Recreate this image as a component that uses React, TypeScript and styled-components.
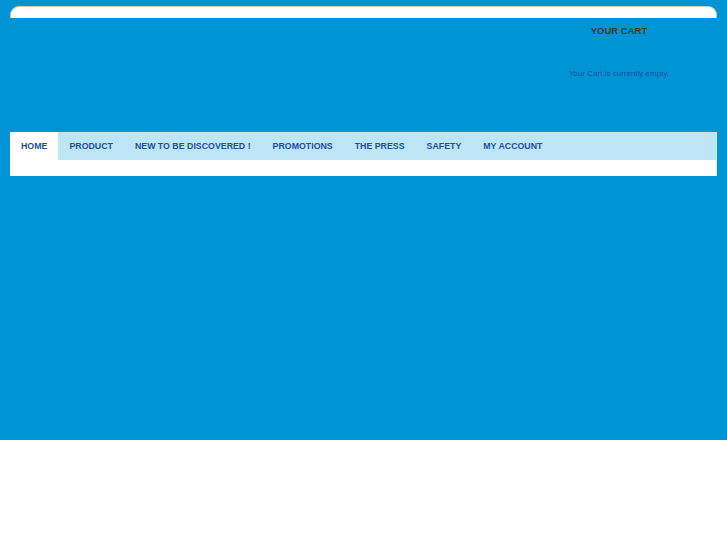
import styled, { createGlobalStyle } from 'styled-components';

const GlobalStyle = createGlobalStyle`
    body {
        margin: 0;
        background: #ffffff;
        font-family: "Liberation Sans", Arial, sans-serif;
    }
`;

const navItems = [
    'HOME',
    'PRODUCT',
    'NEW TO BE DISCOVERED !',
    'PROMOTIONS',
    'THE PRESS',
    'SAFETY',
    'MY ACCOUNT',
];

const App = () => {
    return (
        <>
            <GlobalStyle />
            <Page>
                <TopBar />
                <Header>
                    <Cart>
                        <CartTitle>YOUR CART</CartTitle>
                        <CartEmpty>Your Cart is currently empty.</CartEmpty>
                    </Cart>
                </Header>
                <NavBox>
                    <NavList>
                        {navItems.map((item, i) => (
                            <NavItem key={item} $active={i === 0}>
                                {item}
                            </NavItem>
                        ))}
                    </NavList>
                </NavBox>
            </Page>
        </>
    );
};

const Page = styled.div`
    height: 440px;
    background: #0094d4;
    padding: 6px 10px 0 10px;
    box-sizing: border-box;
`;

const TopBar = styled.div`
    height: 12px;
    background: #ffffff;
    border: 1px solid #c9c9c9;
    border-bottom: none;
    border-radius: 9px 9px 0 0;
    box-sizing: border-box;
`;

const Header = styled.div`
    height: 114px;
    display: flex;
    justify-content: flex-end;
`;

const Cart = styled.div`
    width: 160px;
    margin-right: 18px;
    display: flex;
    flex-direction: column;
    align-items: center;
`;

const CartTitle = styled.div`
    margin-top: 7px;
    font-size: 9.5px;
    font-weight: bold;
    color: #3a3a3a;
`;

const CartEmpty = styled.div`
    margin-top: 33px;
    font-size: 8px;
    color: #1e4f9e;
`;

const NavBox = styled.div`
    height: 44px;
    background: #ffffff;
    border-right: 1px solid #d8eef8;
    box-sizing: border-box;
`;

const NavList = styled.div`
    display: flex;
    height: 28px;
    background: #bde5f5;
`;

const NavItem = styled.div<{ $active?: boolean }>`
    display: flex;
    align-items: center;
    padding: 0 11px;
    font-size: 8.8px;
    font-weight: bold;
    color: #1c4f9c;
    background: ${(p) => (p.$active ? '#ffffff' : 'transparent')};
`;

export default App;
